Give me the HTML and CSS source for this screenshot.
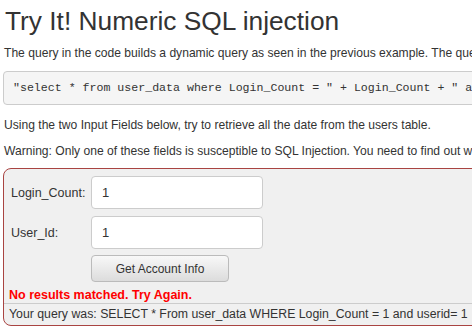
FILE: index.html
```html
<!DOCTYPE html>
<html lang="en">
<head>
  <meta charset="UTF-8" />
  <title>Numeric SQL injection</title>
  <link rel="stylesheet" href="styles.css">
</head>
<body>
  <div class="lesson">
    <h2 class="lesson-title">Try It! Numeric SQL injection</h2>
    <p class="lesson-text">The query in the code builds a dynamic query as seen in the previous example. The query is built by concatenating a number making it susceptible to Numeric SQL injection:</p>
    <pre class="code">"select * from user_data where Login_Count = " + Login_Count + " and userid = "  + User_ID;</pre>
    <p class="lesson-text">Using the two Input Fields below, try to retrieve all the date from the users table.</p>
    <p class="lesson-text">Warning: Only one of these fields is susceptible to SQL Injection. You need to find out which, to successfully retrieve all the data.</p>

    <!-- ATTACK FORM -->
    <div class="attack-box">
      <form class="attack-form">
        <div class="row">
          <label class="field-label" for="loginCount">Login_Count:</label>
          <input class="field" id="loginCount" type="text" value="1">
        </div>
        <div class="row">
          <label class="field-label" for="userId">User_Id:</label>
          <input class="field" id="userId" type="text" value="1">
        </div>
        <div class="row">
          <span class="field-label"></span>
          <button class="btn" type="button">Get Account Info</button>
        </div>
      </form>
      <div class="feedback">No results matched. Try Again.</div>
      <div class="output">Your query was: SELECT * From user_data WHERE Login_Count = 1 and userid= 1</div>
    </div>
  </div>
</body>
</html>
```

FILE: styles.css
```css
/* RESET & BASE */
* { margin:0; padding:0; box-sizing:border-box; }
html, body { background:#fff; color:#333; font-family:'Liberation Sans', Arial, sans-serif; overflow:hidden; }

.lesson { width:900px; padding:0 0 0 4px; }

.lesson-title {
  font-size:26.3px; font-weight:400; line-height:34px;
  padding-top:4px; margin-bottom:7px; margin-left:1px;
}
.lesson-text { font-size:12.1px; line-height:16px; margin-bottom:10px; white-space:nowrap; }

/* CODE BLOCK */
.code {
  font-family:'Liberation Mono', monospace; font-size:11.6px; line-height:16px;
  background:#f5f5f5; border:1px solid #ccc; border-radius:4px;
  padding:8px 9px; margin:0 0 12px -1px; white-space:pre; overflow:hidden;
}

/* ATTACK BOX */
.attack-box {
  margin:-1px 0 0 -1px;
  border:1px solid #a94442; border-radius:8px;
  background:#f0f0f0;
  padding-top:7px;
}
.attack-form { display:flex; flex-direction:column; gap:7px; padding-left:7px; }
.row { display:flex; align-items:center; }
.field-label { width:80px; font-size:12.5px; color:#333; }
.field {
  width:172px; height:33px; padding:0 10px;
  border:1px solid #ccc; border-radius:4px; background:#fff;
  font-family:inherit; font-size:13px; color:#333;
}
.btn {
  width:138px; height:27px; margin-top:-1px;
  border:1px solid #bbb; border-radius:4px;
  background:linear-gradient(#f8f8f8, #dcdcdc);
  font-family:inherit; font-size:12px; color:#333;
}

.feedback {
  color:#f00; font-weight:700; font-size:12.5px; line-height:14px;
  padding:6px 0 1px 5px;
}
.output {
  border-top:1px solid #ccc; font-size:12.3px; line-height:14px;
  padding:3px 0 4px 5px; white-space:nowrap;
}
```
